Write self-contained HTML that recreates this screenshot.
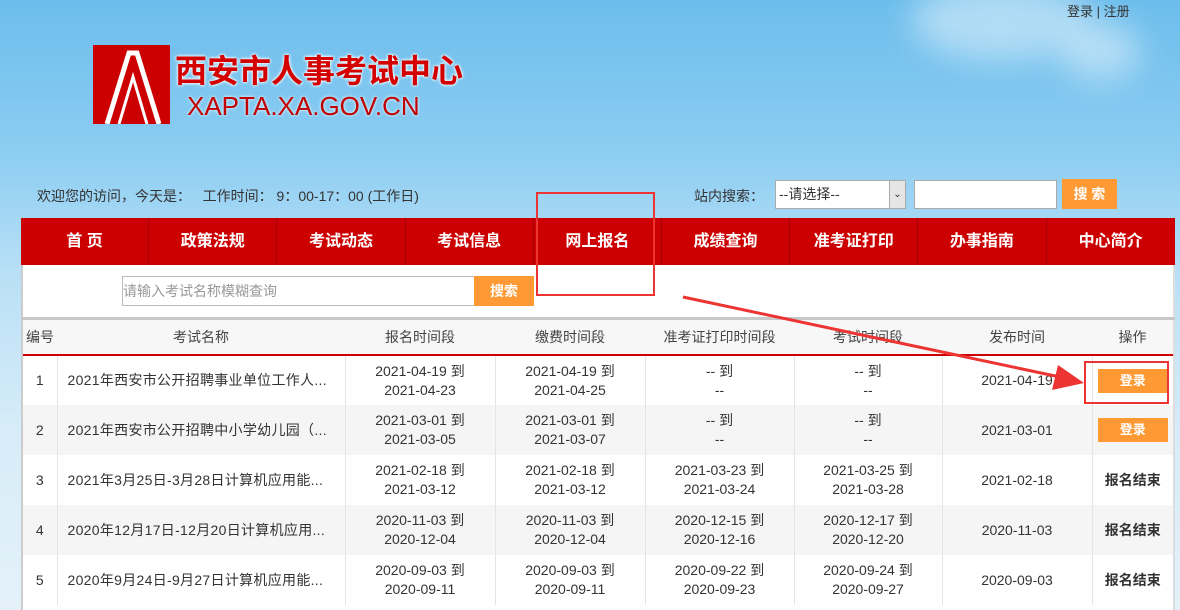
<!DOCTYPE html>
<html><head><meta charset="utf-8"><style>
*{margin:0;padding:0;box-sizing:border-box}
body{width:1180px;height:610px;overflow:hidden;position:relative;font-family:"Liberation Sans","Noto Sans CJK SC",sans-serif;font-size:14px;color:#333;
background:linear-gradient(180deg,#6cbdec 0%,#8ccdf2 25%,#b9e0f6 45%,#d6ecf8 70%,#e4f1f9 100%)}
.a{position:absolute}
.cloud{position:absolute;border-radius:50%;background:rgba(255,255,255,.45);filter:blur(16px)}
.nav{left:21px;top:218px;width:1154px;height:47px;background:#cc0000;display:flex}
.nav div{width:128.2px;color:#fff;font-weight:bold;font-size:16px;text-align:center;line-height:47px;border-right:1px solid #a80000}
.nav div:last-child{border-right:0}
.btn{background:#ff9933;color:#fff;font-weight:bold;text-align:center}
table{position:absolute;left:23px;top:320px;width:1150px;border-collapse:collapse;background:#fff;table-layout:fixed}
td{text-align:center;font-size:14px;line-height:19px;border-right:1px solid #e5e5e5;height:50px;color:#333;white-space:nowrap;overflow:hidden}
td:last-child{border-right:0}
tr.h td{height:35px;background:#f7f7f7;color:#444;border-right:0;border-bottom:2px solid #c00}
tr.g td{background:#f5f5f5}
td.n{text-align:left;padding-left:10px;letter-spacing:0.3px}
.dl{display:inline-block;width:70px;height:24px;line-height:24px;background:#ff9933;color:#fff;font-weight:bold;font-size:13px}
</style></head><body>
<div class="cloud" style="left:910px;top:-20px;width:180px;height:80px"></div>
<div class="cloud" style="left:1060px;top:20px;width:80px;height:60px"></div>
<div class="a" style="left:1067px;top:1px;font-size:13px;color:#333">登录 | 注册</div>
<div class="a" style="left:93px;top:45px;width:77px;height:79px;background:#cc0000">
<svg width="77" height="79"><g fill="none" stroke="#fff"><path d="M14 79 L36 8 L44 8 L66 79" stroke-width="5"/><path d="M26 79 L40 32 L54 79" stroke-width="3"/></g></svg></div>
<div class="a" style="left:175px;top:46px;font-size:32px;font-weight:bold;color:#d40000;text-shadow:0 0 3px #fff,0 0 3px #fff">西安市人事考试中心</div>
<div class="a" style="left:187px;top:91px;font-size:26px;color:#c00000;text-shadow:0 0 3px #fff">XAPTA.XA.GOV.CN</div>
<div class="a" style="left:37px;top:186px;font-size:14px">欢迎您的访问，今天是：&nbsp;&nbsp;&nbsp;工作时间：&nbsp;9：00-17：00 (工作日)</div>
<div class="a" style="left:694px;top:186px">站内搜索：</div>
<div class="a" style="left:775px;top:180px;width:131px;height:29px;background:#fff;border:1px solid #aaa;line-height:27px;padding-left:3px">--请选择--<div class="a" style="right:0;top:0;width:16px;height:27px;background:#e5e5e5;border-left:1px solid #aaa;font-size:10px;text-align:center">⌄</div></div>
<div class="a" style="left:914px;top:180px;width:143px;height:29px;background:#fff;border:1px solid #aaa"></div>
<div class="a btn" style="left:1062px;top:179px;width:55px;height:30px;line-height:30px;font-size:14px">搜 索</div>
<div class="nav a"><div>首 页</div><div>政策法规</div><div>考试动态</div><div>考试信息</div><div>网上报名</div><div>成绩查询</div><div>准考证打印</div><div>办事指南</div><div>中心简介</div></div>
<div class="a" style="left:21px;top:265px;width:1154px;height:345px;background:#fff;border-left:2px solid #ccc;border-right:2px solid #ddd"></div>
<div class="a" style="left:21px;top:317px;width:1154px;height:3px;background:#c8c8c8"></div>
<div class="a" style="left:122px;top:276px;width:353px;height:30px;border:1px solid #bbb;line-height:28px;color:#999;font-size:14px">请输入考试名称模糊查询</div>
<div class="a btn" style="left:474px;top:276px;width:60px;height:30px;line-height:30px;font-size:14px">搜索</div>
<table>
<colgroup><col style="width:34px"><col style="width:288px"><col style="width:150px"><col style="width:150px"><col style="width:149px"><col style="width:148px"><col style="width:150px"><col></colgroup>
<tr class="h"><td>编号</td><td>考试名称</td><td>报名时间段</td><td>缴费时间段</td><td>准考证打印时间段</td><td>考试时间段</td><td>发布时间</td><td>操作</td></tr>
<tr><td>1</td><td class="n">2021年西安市公开招聘事业单位工作人...</td><td>2021-04-19 到<br>2021-04-23</td><td>2021-04-19 到<br>2021-04-25</td><td>-- 到<br>--</td><td>-- 到<br>--</td><td>2021-04-19</td><td><span class="dl">登录</span></td></tr>
<tr class="g"><td>2</td><td class="n">2021年西安市公开招聘中小学幼儿园（...</td><td>2021-03-01 到<br>2021-03-05</td><td>2021-03-01 到<br>2021-03-07</td><td>-- 到<br>--</td><td>-- 到<br>--</td><td>2021-03-01</td><td><span class="dl">登录</span></td></tr>
<tr><td>3</td><td class="n">2021年3月25日-3月28日计算机应用能...</td><td>2021-02-18 到<br>2021-03-12</td><td>2021-02-18 到<br>2021-03-12</td><td>2021-03-23 到<br>2021-03-24</td><td>2021-03-25 到<br>2021-03-28</td><td>2021-02-18</td><td><b>报名结束</b></td></tr>
<tr class="g"><td>4</td><td class="n">2020年12月17日-12月20日计算机应用...</td><td>2020-11-03 到<br>2020-12-04</td><td>2020-11-03 到<br>2020-12-04</td><td>2020-12-15 到<br>2020-12-16</td><td>2020-12-17 到<br>2020-12-20</td><td>2020-11-03</td><td><b>报名结束</b></td></tr>
<tr><td>5</td><td class="n">2020年9月24日-9月27日计算机应用能...</td><td>2020-09-03 到<br>2020-09-11</td><td>2020-09-03 到<br>2020-09-11</td><td>2020-09-22 到<br>2020-09-23</td><td>2020-09-24 到<br>2020-09-27</td><td>2020-09-03</td><td><b>报名结束</b></td></tr>
</table>
<div class="a" style="left:536px;top:192px;width:119px;height:104px;border:2px solid #ee3333"></div>
<div class="a" style="left:1084px;top:361px;width:85px;height:43px;border:2px solid #ee3333"></div>
<svg class="a" style="left:0;top:0" width="1180" height="610"><path d="M683 297 L1060 377" stroke="#ee3333" stroke-width="3"/><path d="M1084 383 L1052 390 L1058 365 Z" fill="#ee3333"/></svg>
</body></html>
